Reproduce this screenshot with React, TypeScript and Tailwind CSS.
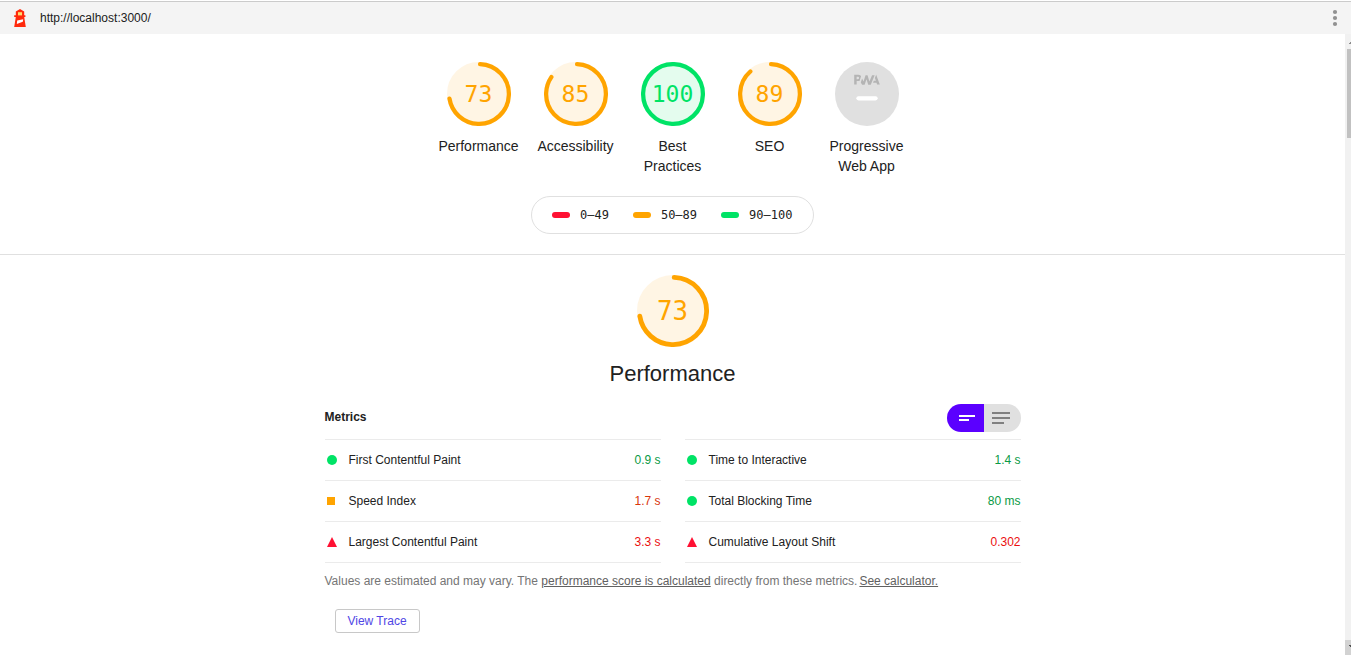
import React from 'react';

type Shape = 'circle' | 'square' | 'triangle';

const ORANGE = '#ffa400';
const LIME = '#00e366';

function Ring({ score, color, size }: { score: number; color: string; size: number }) {
  const length = score === 100 ? 352 : (score / 100) * 2 * Math.PI * 56 - 4;
  return (
    <svg width={size} height={size} viewBox="0 0 120 120" className="block" fill="none">
      <circle cx="60" cy="60" r="56" fill={color} stroke={color} strokeWidth="8" opacity="0.1" />
      <circle
        cx="60"
        cy="60"
        r="56"
        stroke={color}
        strokeWidth="8"
        strokeLinecap="round"
        strokeDasharray={`${length} 352`}
        transform="rotate(-87.95 60 60)"
      />
    </svg>
  );
}

function Gauge({ score, label, color, text }: { score: number; label: string; color: string; text: string }) {
  return (
    <div className="flex w-[97px] flex-col items-center">
      <div className="grid place-items-center">
        <div className="col-start-1 row-start-1">
          <Ring score={score} color={color} size={64} />
        </div>
        <span className={`col-start-1 row-start-1 font-['DejaVu_Sans_Mono',monospace] text-[23.06px] leading-[64px] ${text}`}>
          {score}
        </span>
      </div>
      <div className="mt-[10px] w-[85px] text-center text-[14px] leading-5">{label}</div>
    </div>
  );
}

function PwaGauge() {
  return (
    <div className="flex w-[97px] flex-col items-center">
      <svg width="64" height="64" viewBox="0 0 60 60" className="block">
        <circle cx="30" cy="30" r="30" fill="#e0e0e0" />
        <g fill="#b4b4b4">
          <path d="M35.66 19.39l.7-1.75h2L37.4 15 38.6 12l3.4 9h-2.51l-.58-1.61z" />
          <path d="M33.52 21.39l3.65-9h-2.42l-2.5 5.82L30.5 12.4h-1.86l-1.9 5.82-1.35-2.65-1.21 3.72L25.4 21.4h2.38l1.72-5.2 1.64 5.2z" />
          <path
            fillRule="evenodd"
            d="M20.3 17.91h1.48c.45 0 .85-.05 1.2-.15l.39-1.18 1.07-3.3a2.64 2.64 0 0 0-.28-.37c-.55-.6-1.36-.91-2.42-.91H18v9h2.3V17.9zm1.96-3.84c.22.22.33.5.33.87 0 .36-.1.65-.29.87-.2.23-.59.35-1.15.35h-.86v-2.41h.87c.52 0 .89.1 1.1.32z"
          />
        </g>
        <rect x="20" y="32" width="20" height="4" rx="2" fill="#fff" />
      </svg>
      <div className="mt-[10px] w-[85px] text-center text-[14px] leading-5">Progressive Web App</div>
    </div>
  );
}

function Mark({ shape }: { shape: Shape }) {
  return (
    <svg width="14" height="12" viewBox="0 0 14 12" className="mr-[10px] block shrink-0">
      {shape === 'circle' && <circle cx="7" cy="6" r="5" fill={LIME} />}
      {shape === 'square' && <rect x="2" y="2" width="8" height="8" fill={ORANGE} />}
      {shape === 'triangle' && <path d="M7 1L12 11H2Z" fill="#ff1133" />}
    </svg>
  );
}

function Metric({ name, value, shape, color }: { name: string; value: string; shape: Shape; color: string }) {
  return (
    <div className="flex h-[41px] items-center border-t border-[#ebebeb]">
      <Mark shape={shape} />
      <span className="flex-1">{name}</span>
      <span className={color}>{value}</span>
    </div>
  );
}

function Range({ color, text }: { color: string; text: string }) {
  return (
    <div className="flex items-center">
      <span className={`mr-[10px] h-[6px] w-[18px] rounded-[3px] ${color}`} />
      <span>{text}</span>
    </div>
  );
}

function Lighthouse() {
  return (
    <svg width="14" height="19" viewBox="0 0 14 19" className="block">
      <path d="M7 0L11.2 2.6V6.2H12.4V8H11.2L12.8 18H1.2L2.8 8H1.2V6.2H2.8V2.6Z" fill="#ff2a0c" />
      <path d="M5 3.2H9V6.4H5Z" fill="#ffdc6b" />
      <path d="M4.2 11.6L10.2 10.2L9.8 12.8L3.8 15Z" fill="#fff" />
    </svg>
  );
}

export default function App() {
  return (
    <div className="flex h-[655px] flex-col overflow-hidden bg-white font-['Liberation_Sans',Arial,sans-serif] text-[12px] text-[#212121]">
      <header className="mt-px flex h-[33px] shrink-0 items-center border-t border-[#cbcbcb] bg-[#f4f4f4] pr-[13px] pl-[13px]">
        <Lighthouse />
        <span className="ml-[13px] flex-1">http://localhost:3000/</span>
        <svg width="6" height="18" viewBox="0 0 6 18" fill="#919191">
          <circle cx="3" cy="3" r="2.1" />
          <circle cx="3" cy="9" r="2.1" />
          <circle cx="3" cy="15" r="2.1" />
        </svg>
      </header>
      <div className="flex flex-1">
        <main className="flex w-[1345px] flex-col items-center">
          <section className="flex w-full flex-col items-center border-b border-[#e0e0e0] pt-[28px] pb-5">
            <div className="flex">
              <Gauge score={73} label="Performance" color={ORANGE} text="text-[#ffa400]" />
              <Gauge score={85} label="Accessibility" color={ORANGE} text="text-[#ffa400]" />
              <Gauge score={100} label="Best Practices" color={LIME} text="text-[#00e366]" />
              <Gauge score={89} label="SEO" color={ORANGE} text="text-[#ffa400]" />
              <PwaGauge />
            </div>
            <div className="mt-5 flex h-[38px] w-[283px] items-center gap-6 rounded-full border border-[#e0e0e0] pl-5 font-['DejaVu_Sans_Mono',monospace]">
              <Range color="bg-[#ff1133]" text="0–49" />
              <Range color="bg-[#ffa400]" text="50–89" />
              <Range color="bg-[#00e366]" text="90–100" />
            </div>
          </section>
          <section className="flex w-[696px] flex-col pt-5">
            <div className="grid place-items-center">
              <div className="col-start-1 row-start-1">
                <Ring score={73} color={ORANGE} size={72} />
              </div>
              <span className="col-start-1 row-start-1 font-['DejaVu_Sans_Mono',monospace] text-[25.78px] leading-[72px] text-[#ffa400]">73</span>
            </div>
            <h1 className="mt-[13px] text-center text-[22px] leading-7">Performance</h1>
            <div className="mt-4 flex h-[35px] items-start justify-between">
              <h2 className="pt-[5px] font-bold leading-4">Metrics</h2>
              <svg width="74" height="28" viewBox="0 0 74 28">
                <path d="M14 0H37V28H14A14 14 0 0 1 14 0Z" fill="#5b00ff" />
                <path d="M37 0H60A14 14 0 0 1 60 28H37Z" fill="#e0e0e0" />
                <path d="M12 11H28V13H12ZM12 15H22V17H12Z" fill="#fff" />
                <path d="M45 8H63V10H45ZM45 13H63V15H45ZM45 18H57V20H45Z" fill="#808080" />
              </svg>
            </div>
            <div className="grid grid-cols-2 gap-x-6">
              <div className="border-b border-[#ebebeb]">
                <Metric name="First Contentful Paint" value="0.9 s" shape="circle" color="text-[#0a9a45]" />
                <Metric name="Speed Index" value="1.7 s" shape="square" color="text-[#d9360b]" />
                <Metric name="Largest Contentful Paint" value="3.3 s" shape="triangle" color="text-[#eb0f0f]" />
              </div>
              <div className="border-b border-[#ebebeb]">
                <Metric name="Time to Interactive" value="1.4 s" shape="circle" color="text-[#0a9a45]" />
                <Metric name="Total Blocking Time" value="80 ms" shape="circle" color="text-[#0a9a45]" />
                <Metric name="Cumulative Layout Shift" value="0.302" shape="triangle" color="text-[#eb0f0f]" />
              </div>
            </div>
            <p className="mt-2 leading-5 text-[#757575]">
              Values are estimated and may vary. The <a className="text-[#616161] underline">performance score is calculated</a> directly from these metrics.<a className="ml-[2px] text-[#616161] underline">See calculator.</a>
            </p>
            <button className="mt-[18px] ml-[10px] h-6 w-[85px] rounded-[3px] border border-[#c8c8c8] text-[#5046e5]">View Trace</button>
          </section>
        </main>
        <aside className="flex w-[6px] flex-col items-end bg-[#f1f1f1]">
          <svg width="6" height="15" viewBox="0 0 6 15">
            <path d="M4 10V9H5V8H6V10Z" fill="#8c8c8c" />
          </svg>
          <div className="h-[89px] w-1 bg-[#c1c1c1]" />
          <div className="flex-1" />
          <svg width="6" height="15" viewBox="0 0 6 15">
            <path d="M0 0H6V15H0Z" fill="#d2d2d2" />
            <path d="M4 5H6V7H5V6H4Z" fill="#505050" />
          </svg>
        </aside>
      </div>
    </div>
  );
}
